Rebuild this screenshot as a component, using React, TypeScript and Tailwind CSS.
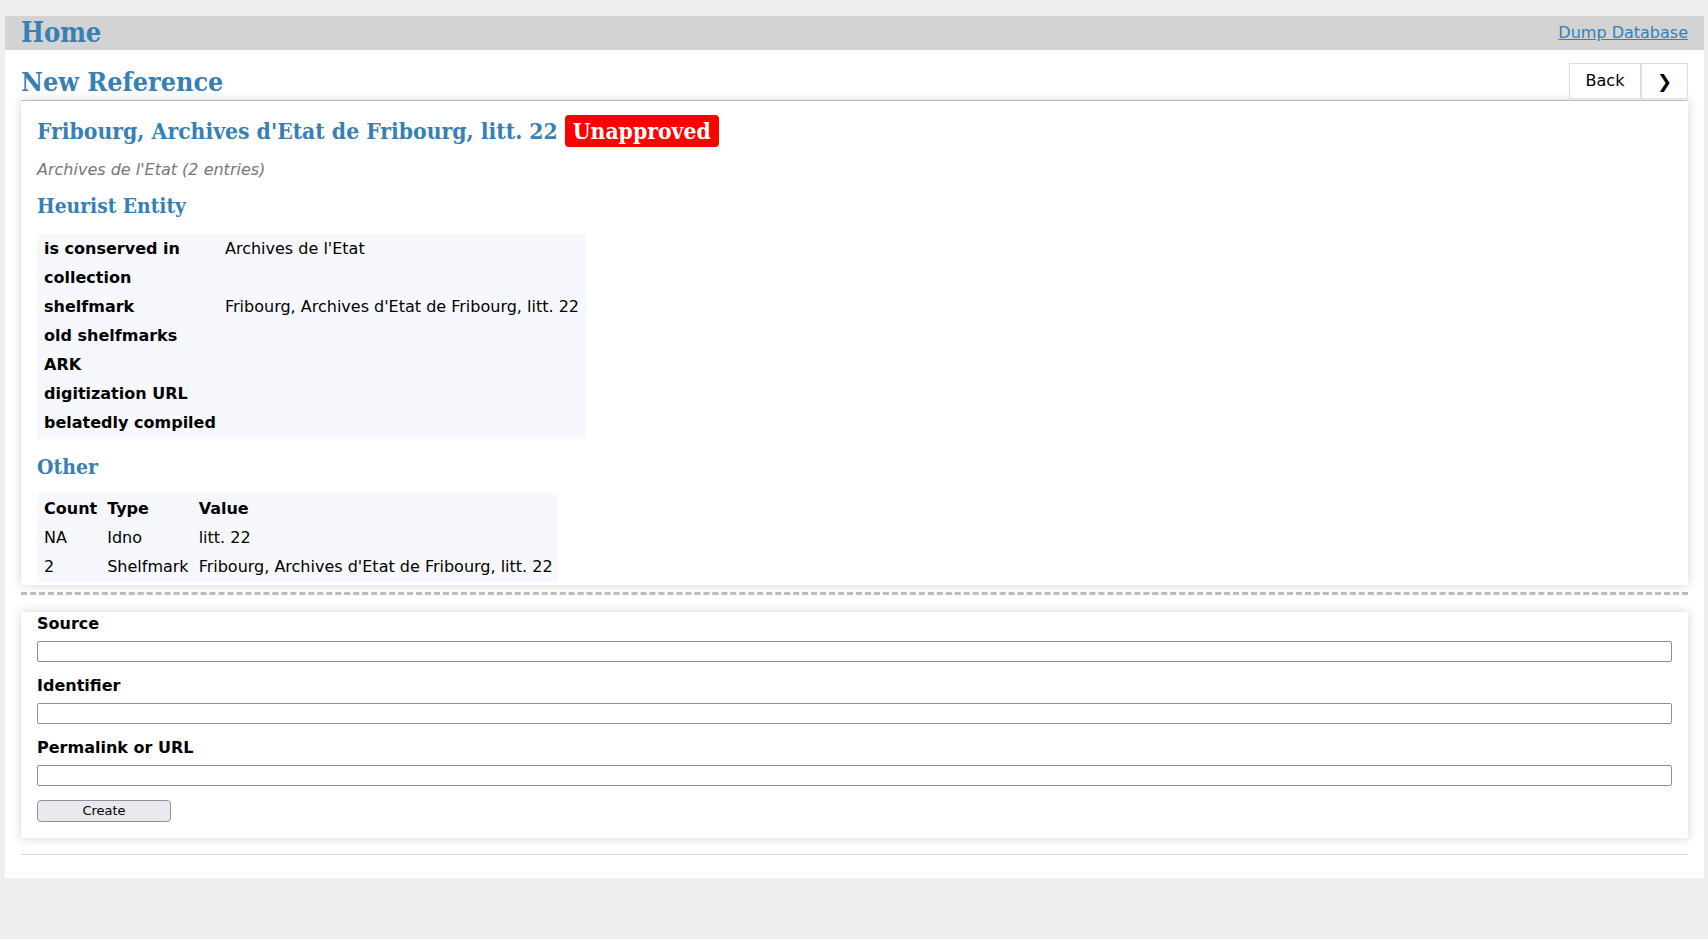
import React from 'react';

const serif = "font-['DejaVu_Serif',serif] font-bold font-stretch-condensed text-[#3780b3]";

const entityRows: [string, string][] = [
  ['is conserved in collection', "Archives de l'Etat"],
  ['shelfmark', "Fribourg, Archives d'Etat de Fribourg, litt. 22"],
  ['old shelfmarks', ''],
  ['ARK', ''],
  ['digitization URL', ''],
  ['belatedly compiled', ''],
];

const otherRows: [string, string, string][] = [
  ['NA', 'Idno', 'litt. 22'],
  ['2', 'Shelfmark', "Fribourg, Archives d'Etat de Fribourg, litt. 22"],
];

const Field = ({ label }: { label: string }) => (
  <div className="mb-[12px]">
    <label className="block font-bold leading-[24px]">{label}</label>
    <input
      type="text"
      className="mt-[5px] block h-[21px] w-full rounded-[2px] border border-[#8f8c9b] bg-white"
    />
  </div>
);

const App = () => {
  return (
    <div className="min-h-screen bg-[#eeeeee] pt-4 pl-[5px] pr-[4px] font-['DejaVu_Sans',sans-serif] text-[16px] text-black">
      <div className="bg-white pb-[23px]">
        {/* Top bar */}
        <div className="flex h-[34px] items-center justify-between bg-[#d3d3d3] px-4">
          <a className={`${serif} text-[27px] leading-[34px]`}>Home</a>
          <a className="text-[16px] text-[#3780b3] underline">Dump Database</a>
        </div>

        <div className="px-4">
          {/* Page title */}
          <div className="flex h-[51px] items-end justify-between border-b border-[#cccccc]">
            <h1 className={`${serif} mb-[2px] text-[26.7px] leading-[32px]`}>New Reference</h1>
            <div className="mb-[1px] flex">
              <button className="h-[36px] w-[72px] border border-[#dddddd] bg-white text-[16px]">Back</button>
              <button className="h-[36px] w-[47px] border border-[#dddddd] bg-white text-[18px] font-bold">❯</button>
            </div>
          </div>

          {/* Reference card */}
          <div className="bg-white px-4 pt-[14px] pb-[3px] shadow-[0_0_10px_rgba(0,0,0,0.18)]">
            <div className="flex items-center gap-[7px]">
              <h2 className={`${serif} text-[22.7px] leading-[32px]`}>Fribourg, Archives d'Etat de Fribourg, litt. 22</h2>
              <span className="h-[32px] rounded-[4px] bg-[#ff0000] px-[8px] font-['DejaVu_Serif',serif] text-[22.7px] leading-[32px] font-bold font-stretch-condensed text-white">
                Unapproved
              </span>
            </div>
            <p className="mt-[11px] leading-[24px] italic text-[#777777]">Archives de l'Etat (2 entries)</p>

            <h3 className={`${serif} mt-[12px] text-[20.8px] leading-[24px]`}>Heurist Entity</h3>
            <table className="mt-[16px] border-collapse bg-[#f7f8fd] leading-[29px]">
              <tbody>
                {entityRows.map(([k, v], i) => (
                  <tr key={k}>
                    <th className={`w-[188px] p-0 pl-[7px] text-left align-top font-bold ${i === entityRows.length - 1 ? 'pb-[2px]' : ''}`}>{k}</th>
                    <td className="p-0 pr-[7px] align-top">{v}</td>
                  </tr>
                ))}
              </tbody>
            </table>

            <h3 className={`${serif} mt-[16px] text-[21px] leading-[24px]`}>Other</h3>
            <table className="mt-[14px] border-separate border-spacing-[2px] bg-[#f7f8fd] leading-[27px]">
              <thead>
                <tr>
                  <th className="pl-[5px] pr-[3px] text-left font-bold">Count</th>
                  <th className="pl-[5px] pr-[3px] text-left font-bold">Type</th>
                  <th className="pl-[5px] pr-[3px] text-left font-bold">Value</th>
                </tr>
              </thead>
              <tbody>
                {otherRows.map(([c, t, v]) => (
                  <tr key={t}>
                    <td className="pl-[5px] pr-[3px]">{c}</td>
                    <td className="pl-[5px] pr-[3px]">{t}</td>
                    <td className="pl-[5px] pr-[3px]">{v}</td>
                  </tr>
                ))}
              </tbody>
            </table>
          </div>

          <div className="mt-[7px] mb-[17px] border-t-[3px] border-dashed border-[#bbbbbb]" />

          {/* Form card */}
          <form className="bg-white px-4 pb-[16px] shadow-[0_0_10px_rgba(0,0,0,0.18)]">
            <Field label="Source" />
            <Field label="Identifier" />
            <Field label="Permalink or URL" />
            <button
              type="button"
              className="mt-[1px] h-[22px] w-[134px] rounded-[4px] border border-[#8f8f9d] bg-[#e9e9ed] text-[13px] leading-[20px]"
            >
              Create
            </button>
          </form>

          <div className="mt-[16px] border-t border-[#d5d5d5]" />
        </div>
      </div>
    </div>
  );
};

export default App;
